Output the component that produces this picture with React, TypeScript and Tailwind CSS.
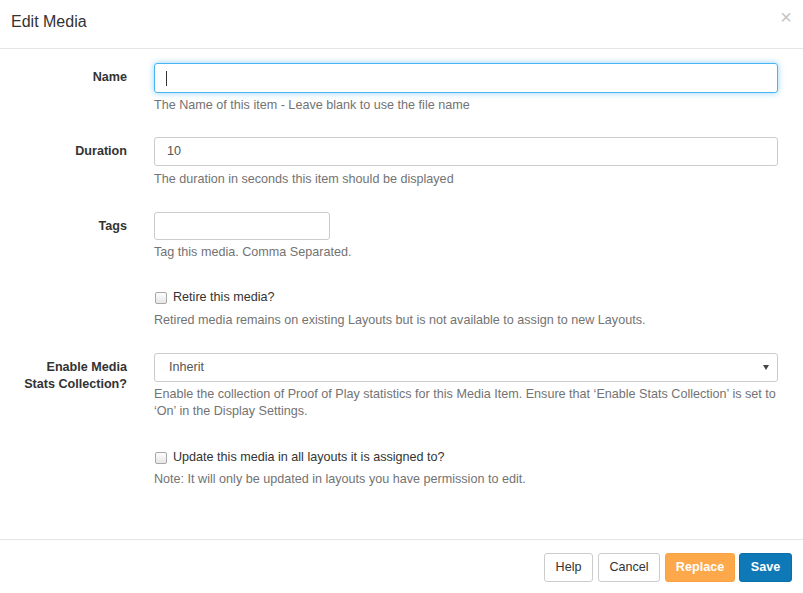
import React from "react";

const FONT = { fontFamily: '"Liberation Sans", Arial, sans-serif' };

function Label({ children }: { children: React.ReactNode }) {
  return (
    <div className="w-[127px] shrink-0 pt-[6px] text-right text-[12.6px] font-bold leading-[17px] text-[#333]">
      {children}
    </div>
  );
}

function Help({ children, className = "" }: { children: React.ReactNode; className?: string }) {
  return <p className={`text-[12.6px] leading-[17px] text-[#737373] ${className}`}>{children}</p>;
}

function Checkbox() {
  return (
    <span className="inline-block h-[12px] w-[12px] shrink-0 rounded-[2px] border border-[#a8a8a8] bg-gradient-to-b from-[#fdfdfd] to-[#e6e6e6]" />
  );
}

export default function App() {
  return (
    <div className="flex h-[593px] w-[803px] flex-col bg-white" style={FONT}>
      {/* Header */}
      <div className="flex h-[49px] shrink-0 items-start justify-between border-b border-[#e5e5e5] pl-[11px] pr-[11px]">
        <h4 className="pt-[12px] text-[16px] leading-[20px] text-[#333]">Edit Media</h4>
        <span className="pt-[7px] text-[20px] leading-[21px] text-[#c4c4c4]">×</span>
      </div>

      {/* Body */}
      <div className="flex-1 pr-[25px] pt-[14px]">
        {/* Name */}
        <div className="flex gap-[27px]">
          <Label>Name</Label>
          <div className="flex-1">
            <div className="flex h-[30px] items-center rounded-[3px] border border-[#4ab3f2] px-[11px] shadow-[0_0_6px_rgba(74,179,242,0.6)]">
              <span className="h-[15px] w-px bg-[#333]" />
            </div>
            <Help className="mt-[4px]">The Name of this item - Leave blank to use the file name</Help>
          </div>
        </div>

        {/* Duration */}
        <div className="mt-[23px] flex gap-[27px]">
          <Label>Duration</Label>
          <div className="flex-1">
            <div className="flex h-[29px] items-center rounded-[3px] border border-[#ccc] px-[12px] text-[12.6px] text-[#555]">
              10
            </div>
            <Help className="mt-[5px]">The duration in seconds this item should be displayed</Help>
          </div>
        </div>

        {/* Tags */}
        <div className="mt-[24px] flex gap-[27px]">
          <Label>Tags</Label>
          <div className="flex-1">
            <div className="h-[28px] w-[176px] rounded-[3px] border border-[#ccc]" />
            <Help className="mt-[4px]">Tag this media. Comma Separated.</Help>
          </div>
        </div>

        {/* Retire */}
        <div className="mt-[28px] flex gap-[27px]">
          <div className="w-[127px] shrink-0" />
          <div className="flex-1">
            <label className="flex items-center gap-[6px] pl-[1px] text-[12.6px] leading-[17px] text-[#333]">
              <Checkbox />
              Retire this media?
            </label>
            <Help className="mt-[6px]">
              Retired media remains on existing Layouts but is not available to assign to new Layouts.
            </Help>
          </div>
        </div>

        {/* Stats */}
        <div className="mt-[24px] flex gap-[27px]">
          <Label>
            Enable Media
            <br />
            Stats Collection?
          </Label>
          <div className="flex-1">
            <div className="flex h-[29px] items-center justify-between rounded-[3px] border border-[#ccc] pl-[14px] pr-[8px] text-[12.6px] text-[#555]">
              <span>Inherit</span>
              <svg width="6" height="5" viewBox="0 0 6 5">
                <path d="M0 0H6L3 5Z" fill="#444" />
              </svg>
            </div>
            <Help className="mt-[4px]">
              Enable the collection of Proof of Play statistics for this Media Item. Ensure that ‘Enable Stats Collection’ is set to ‘On’ in the Display Settings.
            </Help>
          </div>
        </div>

        {/* Update */}
        <div className="mt-[29px] flex gap-[27px]">
          <div className="w-[127px] shrink-0" />
          <div className="flex-1">
            <label className="flex items-center gap-[6px] pl-[1px] text-[12.6px] leading-[17px] text-[#333]">
              <Checkbox />
              Update this media in all layouts it is assigned to?
            </label>
            <Help className="mt-[5px]">Note: It will only be updated in layouts you have permission to edit.</Help>
          </div>
        </div>
      </div>

      {/* Footer */}
      <div className="flex h-[54px] shrink-0 items-start justify-end gap-[5px] border-t border-[#e5e5e5] pr-[11px] pt-[13px]">
        <button className="h-[29px] w-[49px] rounded-[3px] border border-[#ccc] bg-white text-[12.6px] text-[#333]">
          Help
        </button>
        <button className="h-[29px] w-[62px] rounded-[3px] border border-[#ccc] bg-white text-[12.6px] text-[#333]">
          Cancel
        </button>
        <button className="h-[29px] w-[70px] rounded-[3px] border border-[#f7a240] bg-[#fca84b] text-[12.6px] font-bold text-white">
          Replace
        </button>
        <button className="-ml-px h-[29px] w-[53px] rounded-[3px] border border-[#0b6fa8] bg-[#0f78b6] text-[12.6px] font-bold text-white">
          Save
        </button>
      </div>
    </div>
  );
}
